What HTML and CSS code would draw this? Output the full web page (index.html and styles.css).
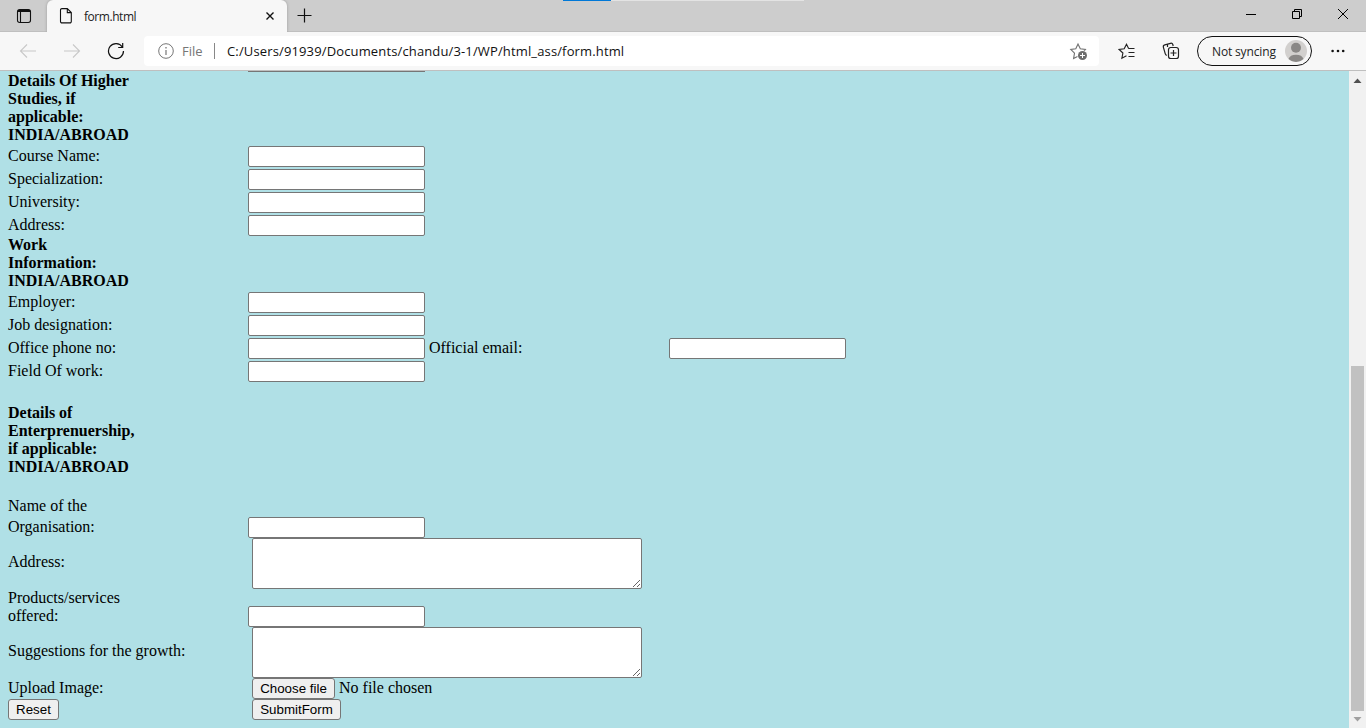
FILE: index.html
```html
<!DOCTYPE html>
<html lang="en">
<head>
<meta charset="utf-8">
<title>form.html</title>
<link rel="stylesheet" href="styles.css">
</head>
<body>
<div class="browser">
  <header class="tabbar">
    <svg class="tab-actions" width="16" height="16" viewBox="0 0 16 16" fill="none" stroke="#111" stroke-width="1.1"><rect x="1.500" y="1.500" width="13" height="13" rx="2.200"/><path d="M1.600 3.500h12.800M2 2.500h12M4.500 4v10.400"/></svg>
    <div class="tab">
      <svg width="14" height="18" viewBox="0 0 14 18" fill="none" stroke="#111" stroke-width="1.1"><path d="M2.900 1.600h5.400l4 4v8.900a1.400 1.400 0 0 1-1.400 1.400h-8a1.400 1.400 0 0 1-1.400-1.400v-11.500a1.400 1.400 0 0 1 1.400-1.400zM8.300 1.600v4h4"/></svg>
      <span class="tab-title">form.html</span>
      <svg width="10" height="10" viewBox="0 0 10 10" stroke="#111" stroke-width="1.4"><path d="M1.500 1.500l7 7M8.500 1.500l-7 7"/></svg>
    </div>
    <svg class="new-tab" width="16" height="16" viewBox="0 0 16 16" stroke="#111" stroke-width="1.2"><path d="M0.500 7.500h14M7.500 0.500v14"/></svg>
    <div class="progress"><div class="progress-fill"></div></div>
    <div class="window-controls">
      <svg width="12" height="12" viewBox="0 0 12 12" stroke="#000"><path d="M1 6.500h10"/></svg>
      <svg width="12" height="12" viewBox="0 0 12 12" fill="none" stroke="#000"><path d="M1.500 3.500h7v7h-7zM3.500 3.500v-2h7v7h-2"/></svg>
      <svg width="12" height="12" viewBox="0 0 12 12" stroke="#000"><path d="M1 1l10 10M11 1l-10 10"/></svg>
    </div>
  </header>
  <nav class="toolbar">
    <svg class="back" width="18" height="16" viewBox="0 0 18 16" fill="none" stroke="#c8c8c8" stroke-width="1.1"><path d="M17 8h-15.500M8 1.500l-6.500 6.500 6.500 6.500"/></svg>
    <svg class="forward" width="18" height="16" viewBox="0 0 18 16" fill="none" stroke="#c8c8c8" stroke-width="1.1"><path d="M1 8h15.500M10 1.500l6.500 6.500-6.500 6.500"/></svg>
    <svg class="reload" width="18" height="18" viewBox="0 0 18 18" fill="none" stroke="#111" stroke-width="1.2"><path d="M15.300 5a7.500 7.500 0 1 0 1.200 4M15.700 1v4.500h-4.500"/></svg>
    <div class="address">
      <svg width="16" height="16" viewBox="0 0 16 16" fill="none" stroke="#767676"><circle cx="8" cy="8" r="7.300"/><path d="M8 7v5" stroke-width="1.200"/><path d="M8 4v1.400" stroke-width="1.300"/></svg>
      <span class="scheme">File</span>
      <span class="divider"></span>
      <span class="url">C:/Users/91939/Documents/chandu/3-1/WP/html_ass/form.html</span>
      <svg class="star" width="20" height="20" viewBox="0 0 20 20"><path d="M9 15.200L4.600 17.400l.9-5.300L1.800 8.500l5-.7L9 3l2.300 4.800 5.100.7-1.500 1.600" fill="none" stroke="#707070" stroke-width="1.100"/><circle cx="13.500" cy="14.500" r="5.200" fill="#fff"/><circle cx="13.500" cy="14.500" r="4.500" fill="#6d6d6d"/><path d="M13.500 12v5M11 14.500h5" stroke="#fff"/></svg>
    </div>
    <svg class="favorites" width="18" height="18" viewBox="0 0 18 18" fill="none" stroke="#222" stroke-width="1.150"><path d="M10.500 6.200l-2-4-2.300 4.600-5 .7 3.700 3.500-1 5.200 4.600-2.400M10.300 6.500h6.200M10.500 10.500h6M10.500 14.500h6"/></svg>
    <svg class="collections" width="18" height="18" viewBox="0 0 18 18" fill="none" stroke="#222" stroke-width="1.200"><path d="M4.800 13.300c-.8-.2-1.300-.8-1.500-1.500L1.400 5.300C1.100 4.100 1.700 3.200 2.800 2.900L8.500 1.300c1.100-.3 2 .2 2.300 1.200l.4 1.500M5.500 5v-2.500"/><rect x="6.500" y="5.500" width="10" height="11" rx="2.300" fill="#f7f7f7"/><path d="M11.500 8v6M8.500 11h6"/></svg>
    <div class="profile">
      <span>Not syncing</span>
      <svg width="24" height="24" viewBox="0 0 24 24"><circle cx="12" cy="12" r="11" fill="#d2d0ce"/><circle cx="12" cy="8.800" r="5" fill="#8a8886"/><path d="M4.500 20a7.700 5.600 0 0 1 15 0a11 11 0 0 1-15 0z" fill="#8a8886"/></svg>
    </div>
    <svg class="more" width="14" height="4" viewBox="0 0 14 4" fill="#111"><circle cx="1.600" cy="2" r="1.300"/><circle cx="7" cy="2" r="1.300"/><circle cx="12.200" cy="2" r="1.300"/></svg>
  </nav>
  <div class="viewport">
    <form class="page">
      <div class="clipped-field"></div>
      <div class="heading">Details Of Higher<br>Studies, if<br>applicable:<br>INDIA/ABROAD</div>
      <label class="row"><span class="label">Course Name:</span><input type="text"></label>
      <label class="row"><span class="label">Specialization:</span><input type="text"></label>
      <label class="row"><span class="label">University:</span><input type="text"></label>
      <label class="row"><span class="label">Address:</span><input type="text"></label>
      <div class="heading">Work<br>Information:<br>INDIA/ABROAD</div>
      <label class="row"><span class="label">Employer:</span><input type="text"></label>
      <label class="row"><span class="label">Job designation:</span><input type="text"></label>
      <div class="row"><span class="label">Office phone no:</span><input type="text"><span class="label second">Official email:</span><input type="text"></div>
      <label class="row"><span class="label">Field Of work:</span><input type="text"></label>
      <div class="heading venture">Details of<br>Enterprenuership,<br>if applicable:<br>INDIA/ABROAD</div>
      <div class="line">Name of the</div>
      <label class="row"><span class="label">Organisation:</span><input type="text"></label>
      <label class="area-row"><span class="label">Address:</span><textarea></textarea></label>
      <label class="products"><span class="label">Products/services<br>offered:</span><input type="text"></label>
      <label class="area-row"><span class="label">Suggestions for the growth:</span><textarea></textarea></label>
      <div class="button-row"><span class="label wide">Upload Image:</span><button type="button" class="choose">Choose file</button><span class="file-name">No file chosen</span></div>
      <div class="button-row"><span class="label wide"><button type="reset" class="reset">Reset</button></span><button type="button" class="submit">SubmitForm</button></div>
    </form>
    <div class="scrollbar">
      <svg width="9" height="5" viewBox="0 0 9 5"><path d="M0.500 5L4.500 0.500 8.500 5z" fill="#505050"/></svg>
      <div class="thumb"></div>
      <svg width="9" height="5" viewBox="0 0 9 5"><path d="M0.500 0L4.500 4.500 8.500 0z" fill="#a0a0a0"/></svg>
    </div>
  </div>
</div>
</body>
</html>
```
FILE: styles.css
```css
* { box-sizing: border-box; }
body { margin: 0; overflow: hidden; }
svg { display: block; flex: none; }
.browser { display: flex; flex-direction: column; width: 1366px; height: 728px; font-family: "Open Sans", sans-serif; }

.tabbar { display: flex; height: 32px; background: #cdcdcd; box-shadow: inset 0 -1px #bfbfbf; }
.tab-actions { margin: 8px 15px 0 16px; }
.tab { display: flex; align-items: center; width: 240px; height: 32px; padding: 0 12px; background: #f7f7f7; border-radius: 6px 6px 0 0; box-shadow: 0 0 3px #999; clip-path: inset(0 -3px 0 -3px); }
.tab-title { flex: 1; margin-left: 11px; font-size: 12px; letter-spacing: -0.45px; color: #222; }
.new-tab { margin: 8px 0 0 10px; }
.progress { width: 241px; height: 1px; margin-left: 250px; background: #e3e3e3; }
.progress-fill { width: 48px; height: 1px; background: #0078d7; }
.window-controls { display: flex; gap: 34px; margin: 8px 17px 0 auto; }

.toolbar { display: flex; align-items: center; height: 39px; background: #f7f7f7; border-bottom: 1px solid #bfbfbf; }
.back { margin-left: 19px; }
.forward { margin-left: 26px; }
.reload { margin-left: 26px; }
.address { display: flex; align-items: center; width: 955px; height: 30px; margin-left: 19px; padding-left: 14px; background: #fff; border-radius: 4px; }
.scheme { width: 22px; margin-left: 8px; font-size: 13px; color: #767676; }
.divider { width: 1px; height: 16px; margin-left: 10px; background: #888; }
.url { flex: 1; margin-left: 12px; font-size: 13px; letter-spacing: 0.14px; white-space: nowrap; color: #111; }
.star { margin-right: 10px; }
.favorites { margin-left: 19px; }
.collections { margin-left: 26px; }
.profile { display: flex; align-items: center; justify-content: space-between; width: 115px; height: 30px; margin-left: 17px; padding: 0 3px 0 14px; border: 1px solid #111; border-radius: 15px; font-size: 12px; letter-spacing: -0.15px; color: #222; white-space: nowrap; }
.more { margin-left: 19px; }

.viewport { display: flex; flex: 1; min-height: 0; }
.page { width: 1349px; padding-left: 8px; overflow: hidden; background: #b0e0e6; font: 16px/18px "Liberation Serif", serif; color: #000; }
.clipped-field { width: 177px; height: 1px; margin-left: 240px; background: #767676; }
.heading { font-weight: bold; }
.venture { margin: 22px 0 21px; }
.row { display: flex; align-items: flex-start; height: 23px; padding-top: 2px; }
.label { flex: none; width: 240px; padding-top: 1px; }
.wide { width: 244px; }
.second { margin-left: 4px; width: 240px; }
input { flex: none; width: 177px; height: 21px; margin: 0; padding: 1px 2px; border: 1px solid #767676; border-radius: 2px; background: #fff; }
.line { height: 18px; }
.area-row { display: flex; align-items: center; height: 51px; }
.area-row .label { width: 244px; padding: 0 0 4px; }
textarea { width: 390px; height: 51px; margin: 0; padding: 2px; border: 1px solid #767676; border-radius: 2px; background: #fff; resize: both; }
.products { display: flex; align-items: flex-end; height: 38px; }
.products .label { height: 38px; padding: 0; }
.button-row { display: flex; height: 21px; }
.button-row .wide:has(button) { padding: 0; }
button { height: 21px; margin: 0; padding: 0; border: 1px solid #767676; border-radius: 3px; background: #efefef; color: #000; font: 13.333px "Liberation Sans", sans-serif; white-space: nowrap; }
.choose { width: 83px; }
.reset { display: block; width: 51px; }
.submit { width: 89px; }
.file-name { margin-left: 4px; padding-top: 1px; }

.scrollbar { display: flex; flex-direction: column; align-items: center; width: 17px; padding: 7px 0; background: #f1f1f1; }
.thumb { flex: none; width: 13px; height: 345px; margin: 283px 0 6px; background: #c1c1c1; }
```
